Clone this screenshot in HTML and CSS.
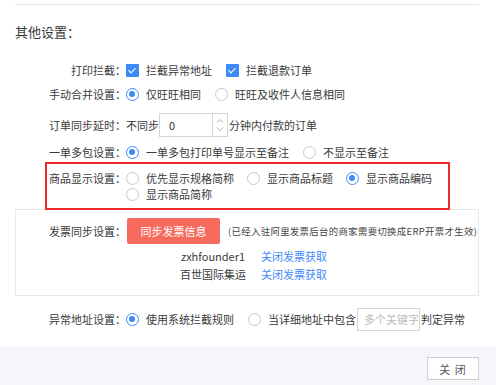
FILE: index.html
```html
<!DOCTYPE html>
<html lang="zh-CN">
<head>
<meta charset="UTF-8" />
<title>其他设置</title>
<link rel="stylesheet" href="styles.css">
</head>
<body>

<div class="content">
  <div class="topline"></div>
  <h2 class="section-title">其他设置：</h2>

  <div class="row row-first">
    <span class="row-label">打印拦截：</span>
    <div class="row-ctrl">
      <span class="opt"><i class="check on"></i>拦截异常地址</span>
      <span class="opt"><i class="check on"></i>拦截退款订单</span>
    </div>
  </div>

  <div class="row">
    <span class="row-label">手动合并设置：</span>
    <div class="row-ctrl">
      <span class="opt"><i class="radio on"></i>仅旺旺相同</span>
      <span class="opt"><i class="radio"></i>旺旺及收件人信息相同</span>
    </div>
  </div>

  <div class="row row-delay">
    <span class="row-label">订单同步延时：</span>
    <div class="row-ctrl">
      <span>不同步</span>
      <span class="spinner">
        <input class="spinner-input" type="text" value="0">
        <span class="spinner-btns">
          <svg width="8" height="5" viewBox="0 0 8 5"><path d="M1 4.5 L4 1.5 L7 4.5" fill="none" stroke="#aaa" stroke-width="1"/></svg>
          <svg width="8" height="5" viewBox="0 0 8 5"><path d="M1 0.5 L4 3.5 L7 0.5" fill="none" stroke="#aaa" stroke-width="1"/></svg>
        </span>
      </span>
      <span>分钟内付款的订单</span>
    </div>
  </div>

  <div class="row row-pack">
    <span class="row-label">一单多包设置：</span>
    <div class="row-ctrl">
      <span class="opt"><i class="radio on"></i>一单多包打印单号显示至备注</span>
      <span class="opt"><i class="radio"></i>不显示至备注</span>
    </div>
  </div>

  <div class="row row-goods highlight">
    <span class="row-label">商品显示设置：</span>
    <div class="row-ctrl wrap">
      <span class="opt"><i class="radio"></i>优先显示规格简称</span>
      <span class="opt"><i class="radio"></i>显示商品标题</span>
      <span class="opt"><i class="radio on"></i>显示商品编码</span>
      <span class="opt"><i class="radio"></i>显示商品简称</span>
    </div>
  </div>

  <div class="invoice-box">
    <div class="row row-invoice">
      <span class="row-label">发票同步设置：</span>
      <div class="row-ctrl">
        <button class="btn-sync">同步发票信息</button>
        <span class="note">(已经入驻阿里发票后台的商家需要切换成ERP开票才生效)</span>
      </div>
    </div>
    <div class="accounts">
      <span class="acc-name">zxhfounder1</span><a class="acc-link" href="#">关闭发票获取</a>
      <span class="acc-name">百世国际集运</span><a class="acc-link" href="#">关闭发票获取</a>
    </div>
  </div>

  <div class="row row-addr">
    <span class="row-label">异常地址设置：</span>
    <div class="row-ctrl">
      <span class="opt"><i class="radio on"></i>使用系统拦截规则</span>
      <span class="opt tight"><i class="radio"></i>当详细地址中包含<input class="kw-input" type="text" placeholder="多个关键字">判定异常</span>
    </div>
  </div>
</div>

<div class="footer">
  <button class="btn-close">关 闭</button>
</div>

</body>
</html>
```

FILE: styles.css
```css
html, body {
  margin: 0;
  padding: 0;
  background: #fff;
  font-family: "Noto Sans CJK SC", "Noto Sans", sans-serif;
  font-size: 11px;
  color: #3a3a3a;
}
.content {
  padding: 4px 17px 15px 15px;
}
.topline {
  height: 1px;
  background: #e8e8e8;
}
.section-title {
  margin: 17px 0 0;
  font-size: 13px;
  font-weight: normal;
  line-height: 20px;
}
.row {
  display: flex;
  align-items: center;
  height: 24px;
}
.row-first {
  margin-top: 16px;
}
.row-label {
  flex: none;
  width: 111px;
  text-align: right;
  white-space: nowrap;
}
.row-ctrl {
  display: flex;
  align-items: center;
  white-space: nowrap;
}
.row-ctrl.wrap {
  flex-wrap: wrap;
  width: 355px;
}
.opt {
  display: inline-flex;
  align-items: center;
  margin-right: 14px;
}
.row-ctrl.wrap .opt {
  margin-right: 13px;
  line-height: 16px;
  height: 16px;
}

/* checkbox / radio */
.check, .radio {
  flex: none;
  display: inline-block;
  box-sizing: border-box;
  width: 13px;
  height: 13px;
  margin-right: 7px;
  position: relative;
}
.check {
  border-radius: 1px;
  background: #3d8af7;
}
.check.on::after {
  content: '';
  position: absolute;
  left: 4px;
  top: 2px;
  width: 3px;
  height: 6px;
  border: solid #fff;
  border-width: 0 1px 1px 0;
  transform: rotate(45deg);
}
.radio {
  border: 1px solid #c9c9c9;
  border-radius: 50%;
  background: #fff;
}
.radio.on {
  border: 1.5px solid #3d8af7;
}
.radio.on::after {
  content: '';
  position: absolute;
  left: 2px;
  top: 2px;
  width: 6px;
  height: 6px;
  border-radius: 50%;
  background: #3d8af7;
}

/* delay spinner */
.row-delay {
  height: 26px;
  margin-top: 6px;
}
.spinner {
  display: inline-flex;
  height: 24px;
  border: 1px solid #d6d6d6;
  box-sizing: border-box;
  margin: 0 1px 0 0;
}
.spinner-input {
  width: 52px;
  border: 0;
  padding: 0 0 0 9px;
  box-sizing: border-box;
  font: inherit;
  color: #333;
  outline: none;
}
.spinner-btns {
  width: 14px;
  border-left: 1px solid #d6d6d6;
  display: flex;
  flex-direction: column;
  align-items: center;
  justify-content: space-around;
  padding: 2px 0;
}

.row-pack {
  margin-top: 2px;
}

/* highlighted goods row */
.row-goods {
  height: auto;
  align-items: flex-start;
  padding: 6px 0 7px;
}
.row-goods .row-label {
  line-height: 16px;
}
.highlight {
  position: relative;
}
.highlight::after {
  content: '';
  position: absolute;
  left: 30px;
  top: -2px;
  bottom: -1px;
  width: 405px;
  border: 2px solid #ef2b2b;
  box-sizing: border-box;
  pointer-events: none;
}

/* invoice */
.invoice-box {
  border: 1px solid #e8e8e8;
  padding: 8px 0 12px;
}
.row-invoice {
  height: 26px;
}
.row-invoice .row-label {
  width: 110px;
}
.btn-sync {
  height: 26px;
  width: 93px;
  margin-left: 1px;
  border: 0;
  border-radius: 2px;
  background: #f76b5f;
  color: #fff;
  font: inherit;
  font-size: 11px;
  padding: 0;
}
.note {
  margin-left: 8px;
  font-size: 9.4px;
  letter-spacing: 0.35px;
  color: #444;
}
.accounts {
  display: grid;
  grid-template-columns: 70px auto;
  column-gap: 13px;
  justify-content: start;
  margin: 3px 0 0 162px;
  line-height: 18px;
}
.acc-name {
  text-align: center;
}
.acc-link {
  color: #3d8af7;
  text-decoration: none;
}

/* abnormal address */
.row-addr {
  margin-top: 11px;
}
.opt.tight {
  margin-right: 0;
}
.kw-input {
  width: 63px;
  height: 23px;
  box-sizing: border-box;
  border: 1px solid #d6d6d6;
  padding: 0 0 0 6px;
  margin: 0 1px;
  font: inherit;
  outline: none;
}
.kw-input::placeholder {
  color: #bbb;
}

/* footer */
.footer {
  background: #f5f6fa;
  height: 39px;
  display: flex;
  justify-content: flex-end;
  align-items: flex-start;
  padding: 11px 17px 0 0;
  box-sizing: border-box;
}
.btn-close {
  width: 52px;
  height: 23px;
  border: 1px solid #cfcfcf;
  background: #fff;
  color: #555;
  font: inherit;
  font-size: 11px;
  letter-spacing: 1px;
  padding: 0;
}
```
